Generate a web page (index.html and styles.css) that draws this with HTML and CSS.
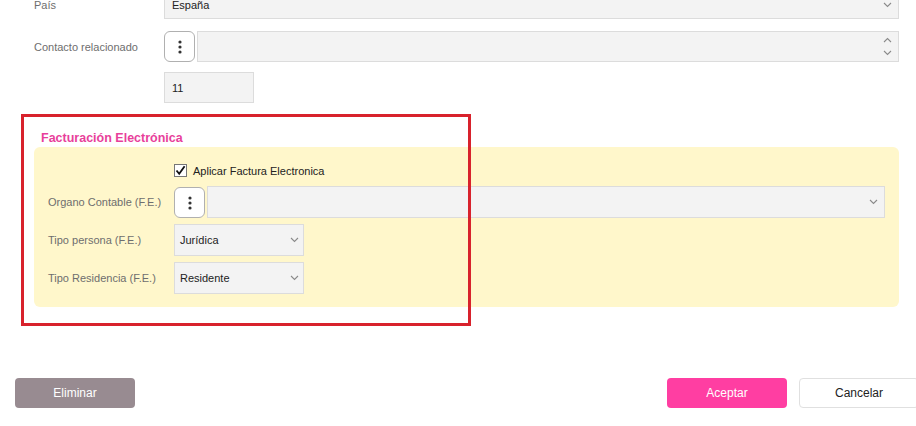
FILE: index.html
```html
<!DOCTYPE html>
<html lang="es">
<head>
    <meta charset="UTF-8">
    <title>Cliente</title>
    <link rel="stylesheet" href="styles.css">
</head>
<body>
    <div class="form-page">
        <div class="form-body">
            <div class="form-row row-pais">
                <label class="form-label">País</label>
                <div class="field select-field">
                    <span>España</span>
                    <svg class="chev" width="9" height="6" viewBox="0 0 9 6"><path d="M1 1l3.5 3.5L8 1" fill="none" stroke="#8a8a8a" stroke-width="1.1"/></svg>
                </div>
            </div>

            <div class="form-row row-contacto">
                <label class="form-label">Contacto relacionado</label>
                <button class="dots-btn">
                    <svg width="4" height="14" viewBox="0 0 4 14"><circle cx="2" cy="2" r="1.6"/><circle cx="2" cy="7" r="1.6"/><circle cx="2" cy="12" r="1.6"/></svg>
                </button>
                <div class="field spin-field">
                    <span></span>
                    <div class="spin">
                        <svg width="9" height="6" viewBox="0 0 9 6"><path d="M1 5l3.5-3.5L8 5" fill="none" stroke="#8a8a8a" stroke-width="1.1"/></svg>
                        <svg width="9" height="6" viewBox="0 0 9 6"><path d="M1 1l3.5 3.5L8 1" fill="none" stroke="#8a8a8a" stroke-width="1.1"/></svg>
                    </div>
                </div>
            </div>

            <div class="form-row row-num">
                <label class="form-label"></label>
                <div class="field num-field">11</div>
            </div>

            <div class="section">
                <h4 class="section-title">Facturación Electrónica</h4>
                <div class="section-panel">
                    <div class="panel-row check-row">
                        <label class="form-label"></label>
                        <span class="checkbox">
                            <svg width="11" height="11" viewBox="0 0 11 11"><path d="M1.5 5.5l2.7 3.3L9.6 1.2" fill="none" stroke="#111" stroke-width="1.8"/></svg>
                        </span>
                        <span class="check-label">Aplicar Factura Electronica</span>
                    </div>
                    <div class="panel-row">
                        <label class="form-label">Organo Contable (F.E.)</label>
                        <button class="dots-btn">
                            <svg width="4" height="14" viewBox="0 0 4 14"><circle cx="2" cy="2" r="1.6"/><circle cx="2" cy="7" r="1.6"/><circle cx="2" cy="12" r="1.6"/></svg>
                        </button>
                        <div class="field select-field">
                            <span></span>
                            <svg class="chev" width="9" height="6" viewBox="0 0 9 6"><path d="M1 1l3.5 3.5L8 1" fill="none" stroke="#8a8a8a" stroke-width="1.1"/></svg>
                        </div>
                    </div>
                    <div class="panel-row">
                        <label class="form-label">Tipo persona (F.E.)</label>
                        <div class="field select-field small">
                            <span>Jurídica</span>
                            <svg class="chev" width="9" height="6" viewBox="0 0 9 6"><path d="M1 1l3.5 3.5L8 1" fill="none" stroke="#8a8a8a" stroke-width="1.1"/></svg>
                        </div>
                    </div>
                    <div class="panel-row">
                        <label class="form-label">Tipo Residencia (F.E.)</label>
                        <div class="field select-field small">
                            <span>Residente</span>
                            <svg class="chev" width="9" height="6" viewBox="0 0 9 6"><path d="M1 1l3.5 3.5L8 1" fill="none" stroke="#8a8a8a" stroke-width="1.1"/></svg>
                        </div>
                    </div>
                </div>
                <div class="highlight-box"></div>
            </div>
        </div>

        <div class="form-footer">
            <button class="btn btn-delete">Eliminar</button>
            <div class="footer-right">
                <button class="btn btn-accept">Aceptar</button>
                <button class="btn btn-cancel">Cancelar</button>
            </div>
        </div>
    </div>
</body>
</html>
```

FILE: styles.css
```css
/* Base */
* {
    margin: 0;
    padding: 0;
    box-sizing: border-box;
}

body {
    font-family: 'Segoe UI', 'Liberation Sans', Arial, sans-serif;
    font-size: 11px;
    color: #222;
    background-color: #fff;
    overflow: hidden;
}

.form-page {
    width: 916px;
    height: 426px;
}

/* Form body */
.form-body {
    padding: 0 17px 0 34px;
    margin-top: -9px;
}

.form-row {
    display: flex;
    align-items: center;
    height: 31px;
}

.form-row.row-pais {
    height: 28px;
}

.row-pais .field {
    height: 28px;
}

.row-contacto {
    margin-top: 12px;
}

.row-num {
    margin-top: 10px;
}

.form-label {
    width: 130px;
    flex-shrink: 0;
    color: #6e6e6e;
}

.field {
    height: 31px;
    background-color: #f3f3f3;
    border: 1px solid #dcdcdc;
    display: flex;
    align-items: center;
    padding: 0 7px;
    color: #222;
}

.select-field,
.spin-field {
    flex: 1;
    justify-content: space-between;
}

.select-field.small {
    flex: none;
    width: 130px;
    padding: 0 5px;
}

.chev {
    margin-right: -1px;
}

.spin {
    display: flex;
    flex-direction: column;
    gap: 7px;
    margin-right: -1px;
}

.spin svg {
    display: block;
}

.num-field {
    width: 90px;
}

.dots-btn {
    width: 31px;
    height: 31px;
    flex-shrink: 0;
    margin-right: 2px;
    background-color: #fff;
    border: 1.5px solid #b0b0b0;
    border-radius: 6px;
    display: flex;
    align-items: center;
    justify-content: center;
}

.dots-btn svg {
    fill: #333;
}

/* Electronic billing section */
.section {
    position: relative;
    margin-top: 27px;
}

.section-title {
    font-size: 12.5px;
    font-weight: bold;
    color: #e83f9b;
    margin-left: 7px;
    height: 17px;
    line-height: 17px;
}

.section-panel {
    background-color: #fff7cb;
    border-radius: 6px;
    padding: 17px 14px 13px 14px;
}

.panel-row {
    display: flex;
    align-items: center;
    height: 32px;
    margin-top: 6px;
}

.panel-row .field {
    height: 32px;
}

.panel-row .dots-btn {
    height: 31px;
    align-self: flex-end;
}

.panel-row.check-row {
    height: 13px;
    margin-top: 0;
    margin-bottom: 9px;
}

.panel-row .form-label {
    width: 126px;
}

.checkbox {
    width: 13px;
    height: 13px;
    border: 1px solid #767676;
    background-color: #fff;
    display: flex;
    align-items: center;
    justify-content: center;
    margin-right: 6px;
}

.check-label {
    color: #222;
}

.highlight-box {
    position: absolute;
    left: -13px;
    top: -16px;
    width: 450px;
    height: 212px;
    border: 3px solid #d8222c;
    pointer-events: none;
}

/* Footer */
.form-footer {
    display: flex;
    align-items: center;
    padding-left: 15px;
    margin-top: 71px;
    margin-right: -3px;
}

.footer-right {
    margin-left: auto;
    display: flex;
    gap: 12px;
}

.btn {
    width: 120px;
    height: 30px;
    border-radius: 4px;
    font-family: inherit;
    font-size: 12px;
    border: none;
    cursor: pointer;
}

.btn-delete {
    background-color: #988b91;
    color: #fff;
}

.btn-accept {
    background-color: #ff3ea2;
    color: #fff;
}

.btn-cancel {
    background-color: #fff;
    color: #222;
    border: 1px solid #e0e0e0;
}
```
